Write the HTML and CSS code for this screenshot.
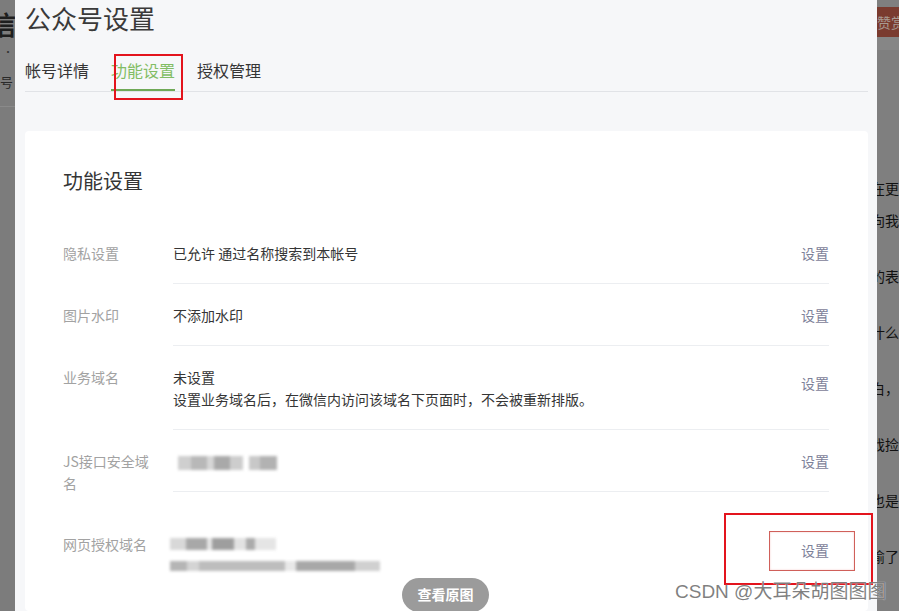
FILE: index.html
```html
<!DOCTYPE html>
<html lang="zh-CN">
<head>
  <meta charset="UTF-8" />
  <title>公众号设置</title>
  <link rel="stylesheet" href="styles.css">
</head>
<body>
  <div class="page">
    <aside class="side-left">
      <div class="frag-big">微信</div>
      <div class="frag-dots">· · · ·</div>
      <div class="frag-small">帐号</div>
      <div class="frag-line"></div>
    </aside>

    <main class="panel">
      <h1 class="title">公众号设置</h1>
      <nav class="tabs">
        <a class="tab">帐号详情</a>
        <a class="tab active">功能设置</a>
        <a class="tab">授权管理</a>
      </nav>
      <div class="mark mark-tab"></div>

      <section class="card">
        <h2 class="card-title">功能设置</h2>

        <div class="row">
          <div class="label">隐私设置</div>
          <div class="body">
            <div class="value">已允许 通过名称搜索到本帐号</div>
            <a class="action">设置</a>
          </div>
        </div>

        <div class="row">
          <div class="label">图片水印</div>
          <div class="body">
            <div class="value">不添加水印</div>
            <a class="action">设置</a>
          </div>
        </div>

        <div class="row">
          <div class="label">业务域名</div>
          <div class="body">
            <div class="value">未设置<br>设置业务域名后，在微信内访问该域名下页面时，不会被重新排版。</div>
            <a class="action action-high">设置</a>
          </div>
        </div>

        <div class="row">
          <div class="label">JS接口安全域名</div>
          <div class="body">
            <div class="value">
              <span class="blur blur-a"></span><span class="blur blur-b"></span>
            </div>
            <a class="action">设置</a>
          </div>
        </div>

        <div class="row row-last">
          <div class="label">网页授权域名</div>
          <div class="body">
            <div class="value">
              <div class="blur-line"><span class="blur blur-c"></span></div>
              <div class="blur-line"><span class="blur blur-d"></span></div>
            </div>
            <a class="action action-high">设置</a>
          </div>
        </div>
      </section>
    </main>

    <aside class="side-right">
      <div class="reward">赞赏</div>
      <div class="reward-band"></div>
      <div class="frags">
        <div class="frag first">在更多</div>
        <div class="frag">向我们</div>
        <div class="frag">的表达</div>
        <div class="frag">什么的</div>
        <div class="frag">白，但</div>
        <div class="frag">戏捡起</div>
        <div class="frag">也是我</div>
        <div class="frag">偷了的</div>
      </div>
    </aside>
  </div>

  <div class="mark mark-outer"></div>
  <div class="mark-inner"></div>
  <div class="view-origin">查看原图</div>
  <div class="watermark">CSDN @大耳朵胡图图图</div>
</body>
</html>
```

FILE: styles.css
```css
* {
  box-sizing: border-box;
}
body {
  margin: 0;
  width: 899px;
  height: 611px;
  overflow: hidden;
  position: relative;
  font-family: "Noto Sans CJK SC", "Noto Sans", sans-serif;
  background: #7e7e7e;
  color: #353535;
}
.page {
  display: flex;
  height: 611px;
}

/* dimmed page behind the dialog */
.side-left {
  width: 15px;
  overflow: hidden;
  background: #7c7c7c;
  display: flex;
  flex-direction: column;
  align-items: flex-end;
}
.frag-big {
  white-space: nowrap;
  font-size: 26px;
  font-weight: bold;
  line-height: 48px;
  color: #1e1e1e;
  margin-right: -1px;
}
.frag-dots {
  white-space: nowrap;
  font-size: 10px;
  line-height: 8px;
  color: #333;
  margin-right: 2px;
}
.frag-small {
  white-space: nowrap;
  font-size: 13px;
  line-height: 20px;
  margin-top: 16px;
  color: #2a2a2a;
  margin-right: 2px;
}
.frag-line {
  width: 15px;
  height: 1px;
  margin-top: 14px;
  background: #8a8a8a;
}

.side-right {
  width: 22px;
  overflow: hidden;
  background: #7f7f7f;
}
.reward {
  margin-top: 7px;
  height: 30px;
  line-height: 30px;
  background: #7a3b2f;
  color: #a89a92;
  font-size: 14px;
  white-space: nowrap;
}
.reward-band {
  height: 13px;
  background: #868686;
}
.frags {
  padding-top: 128px;
}
.frag {
  white-space: nowrap;
  font-size: 14px;
  color: #111;
  line-height: 20px;
  height: 56px;
  margin-left: -6px;
}
.frag.first {
  height: 32px;
}

/* dialog */
.panel {
  width: 862px;
  background: #f6f7f9;
  padding: 0 9px 0 10px;
  display: flex;
  flex-direction: column;
}
.title {
  margin: 0;
  font-size: 26px;
  font-weight: normal;
  line-height: 36px;
  color: #3a3a3a;
}
.tabs {
  display: flex;
  gap: 22px;
  margin-top: 22px;
  border-bottom: 1px solid #e1e3e7;
}
.tab {
  font-size: 16px;
  line-height: 24px;
  padding-bottom: 7px;
  border-bottom: 2px solid transparent;
  color: #353535;
}
.tab.active {
  color: #82bd64;
  border-bottom-color: #6fa957;
}

.card {
  flex: 1;
  margin-top: 39px;
  background: #fff;
  border-radius: 4px;
  padding: 36px 39px 0 38px;
}
.card-title {
  margin: 0 0 27px;
  font-size: 20px;
  font-weight: normal;
  line-height: 28px;
  color: #353535;
}
.row {
  display: flex;
  font-size: 14px;
  line-height: 22px;
}
.label {
  width: 110px;
  height: 42px;
  padding: 20px 18px 0 0;
  color: #a2a2a2;
}
.body {
  flex: 1;
  display: flex;
  align-items: center;
  padding: 20px 0 19px;
  border-bottom: 1px solid #eceef1;
}
.value {
  flex: 1;
  color: #353535;
}
.action {
  color: #7d8199;
}
.action-high {
  margin-bottom: 10px;
}
.row-last .label,
.row-last .body {
  padding-top: 41px;
}
.row-last .body {
  border-bottom: none;
}

/* pixelated values */
.blur {
  display: inline-block;
  vertical-align: middle;
  filter: blur(1.5px);
}
.blur-a {
  width: 65px;
  height: 14px;
  margin-left: 5px;
  background: linear-gradient(90deg, #cfcfcf 0 20%, #b8b8b8 20% 45%, #d6d6d6 45% 55%, #a9a9a9 55% 80%, #cdcdcd 80%);
}
.blur-b {
  width: 28px;
  height: 14px;
  margin-left: 6px;
  background: linear-gradient(90deg, #c8c8c8 0 40%, #b2b2b2 40%);
}
.blur-line {
  height: 22px;
  display: flex;
  align-items: center;
}
.blur-c {
  width: 106px;
  height: 12px;
  margin-left: -3px;
  background: linear-gradient(90deg, #d8d8d8 0 15%, #a8a8a8 15% 35%, #e6e6e6 35% 40%, #9e9e9e 40% 60%, #e2e2e2 60% 72%, #ababab 72% 80%, #e5e5e5 80%);
}
.blur-d {
  width: 210px;
  height: 10px;
  margin-left: -3px;
  background: linear-gradient(90deg, #b5b5b5 0 8%, #d4d4d4 8% 14%, #bdbdbd 14% 55%, #e8e8e8 55% 60%, #a8a8a8 60% 88%, #d0d0d0 88%);
}

/* screenshot annotations */
.mark {
  position: absolute;
  border: 2px solid #e3141d;
}
.mark-tab {
  left: 114px;
  top: 54px;
  width: 69px;
  height: 46px;
}
.mark-outer {
  left: 724px;
  top: 513px;
  width: 149px;
  height: 72px;
}
.mark-inner {
  position: absolute;
  left: 769px;
  top: 531px;
  width: 86px;
  height: 40px;
  border: 1px solid #d0605a;
  box-shadow: inset 0 0 2px #f4c4c4;
}
.view-origin {
  position: absolute;
  left: 402px;
  top: 578px;
  width: 87px;
  height: 34px;
  border-radius: 17px;
  background: #9b9b9b;
  color: #fff;
  font-size: 14px;
  font-weight: bold;
  line-height: 32px;
  text-align: center;
}
.watermark {
  position: absolute;
  left: 675px;
  top: 580px;
  font-family: "Liberation Sans", "Noto Sans CJK SC", sans-serif;
  font-size: 19px;
  line-height: 24px;
  color: rgba(105, 105, 105, 0.85);
  text-shadow: 0 0 1px #fff;
  white-space: nowrap;
}
```
